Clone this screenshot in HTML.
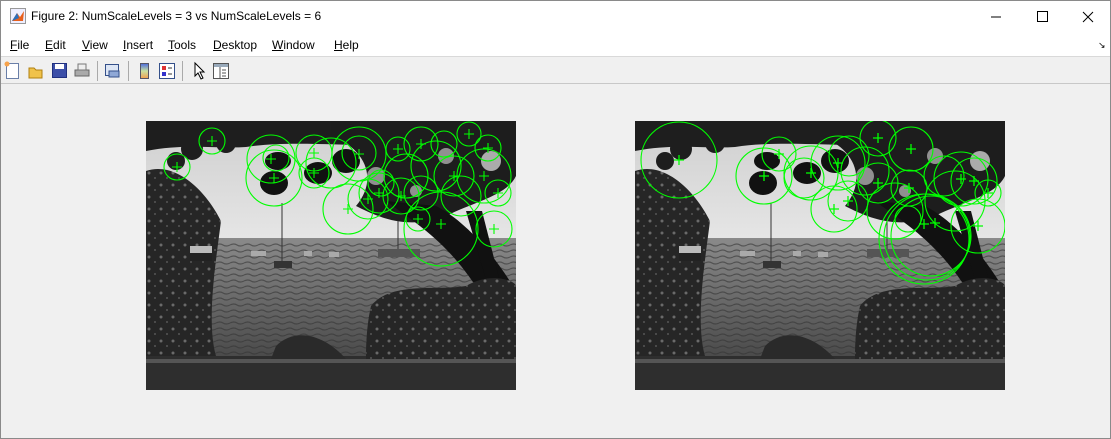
<!DOCTYPE html>
<html><head><style>
*{margin:0;padding:0;box-sizing:border-box}
body{width:1111px;height:439px;overflow:hidden;background:#f0f0f0;font-family:"Liberation Sans",sans-serif;font-size:12px;color:#000;position:relative;border:1px solid #8a8a8a}
.title{position:absolute;left:0;top:0;width:1109px;height:31px;background:#fff}
.title span{position:absolute;left:30px;top:8px;font-size:12px}
.menu{position:absolute;left:0;top:31px;width:1109px;height:25px;background:#fff;border-bottom:1px solid #d9d9d9}
.menu span{position:absolute;top:6px}
.tb{position:absolute;left:0;top:57px;width:1109px;height:26px;background:#f0f0f0;border-bottom:1px solid #c8c8c8}
.sep{position:absolute;top:3px;width:1px;height:20px;background:#aaa}
.img{position:absolute;top:120px;width:370px;height:269px}
</style></head><body>
<div class="title">
<svg style="position:absolute;left:9px;top:7px" width="16" height="16"><rect x="0.5" y="0.5" width="15" height="15" fill="#eef" stroke="#999"/><path d="M2 13 L7 5 L10 9 L14 3 L13 13 Z" fill="#e8601c"/><path d="M2 13 L7 5 L9 10 Z" fill="#2a6ebb"/></svg>
<span>Figure 2: NumScaleLevels = 3 vs NumScaleLevels = 6</span>
<svg style="position:absolute;left:990px;top:10px" width="110" height="12"><path d="M0 6 H10" stroke="#000"/><rect x="46.5" y="0.5" width="10" height="10" fill="none" stroke="#000"/><path d="M92 1 L102 11 M102 1 L92 11" stroke="#000"/></svg>
</div>
<div class="menu">
<span style="left:9px"><u>F</u>ile</span><span style="left:44px"><u>E</u>dit</span><span style="left:81px"><u>V</u>iew</span><span style="left:122px"><u>I</u>nsert</span><span style="left:167px"><u>T</u>ools</span><span style="left:212px"><u>D</u>esktop</span><span style="left:271px"><u>W</u>indow</span><span style="left:333px"><u>H</u>elp</span>
<span style="left:1097px;top:8px;font-size:9px">↘</span>
</div>
<div class="tb">
<svg width="240" height="26" style="position:absolute;left:0;top:0">
<rect x="5.5" y="5.5" width="12" height="15" fill="#fff" stroke="#6a7fa8"/><circle cx="6" cy="6" r="2.5" fill="#f7a34b"/>
<path d="M28 10 h5 l2 2 h6 v8 h-13z" fill="#f0c24a" stroke="#b08010"/>
<rect x="51.5" y="5.5" width="14" height="14" fill="#3c4fa8" stroke="#203080"/><rect x="54" y="6" width="9" height="5" fill="#fff"/>
<path d="M74 12 h14 v6 h-14z" fill="#aaa" stroke="#666"/><rect x="77" y="6" width="8" height="6" fill="#eee" stroke="#777"/>
<rect x="104.5" y="6.5" width="13" height="11" fill="#dde6f5" stroke="#34508a"/><rect x="108" y="13" width="10" height="6" fill="#8fa8d6" stroke="#34508a"/>
<defs><linearGradient id="cb" x1="0" y1="0" x2="0" y2="1"><stop offset="0" stop-color="#4a6adf"/><stop offset=".5" stop-color="#c8e0a0"/><stop offset="1" stop-color="#f0a050"/></linearGradient></defs>
<rect x="139.5" y="5.5" width="8" height="15" fill="url(#cb)" stroke="#556"/>
<rect x="158.5" y="5.5" width="15" height="15" fill="#fff" stroke="#34508a"/><rect x="161" y="8" width="4" height="4" fill="#d33"/><rect x="161" y="14" width="4" height="4" fill="#33c"/><path d="M167 10 h4 M167 16 h4" stroke="#333"/>
<path d="M194 5 v13 l3 -3 l3 6 l2 -1 l-3 -6 h4z" fill="#fff" stroke="#000"/>
<rect x="212.5" y="5.5" width="15" height="15" fill="#fff" stroke="#555"/><rect x="213" y="6" width="14" height="3" fill="#9ab"/><path d="M219 9 v11 M221 12 h4 M221 15 h4 M221 18 h4" stroke="#555"/>
</svg>
<div class="sep" style="left:96px"></div><div class="sep" style="left:127px"></div><div class="sep" style="left:181px"></div>
</div>

<svg width="0" height="0" style="position:absolute">
<defs>
<linearGradient id="sky" x1="0" y1="0" x2="0" y2="1"><stop offset="0" stop-color="#cfcfcf"/><stop offset=".45" stop-color="#e6e6e6"/><stop offset="1" stop-color="#bdbdbd"/></linearGradient>
<linearGradient id="wat" x1="0" y1="0" x2="0" y2="1"><stop offset="0" stop-color="#8a8a8a"/><stop offset="1" stop-color="#4a4a4a"/></linearGradient>
<pattern id="rip" width="14" height="6" patternUnits="userSpaceOnUse"><rect width="14" height="6" fill="none"/><path d="M0 4 Q4 2 7 4 T14 4" stroke="#333" stroke-width="1.2" fill="none" opacity=".6"/></pattern>
<pattern id="leaf" width="12" height="12" patternUnits="userSpaceOnUse"><rect width="12" height="12" fill="#262626"/><circle cx="3" cy="4" r="1.5" fill="#6a6a6a"/><circle cx="9" cy="9" r="1" fill="#555"/></pattern>
<g id="scene">
<rect width="370" height="269" fill="url(#sky)"/>
<rect y="117" width="370" height="120" fill="url(#wat)"/>
<rect y="122" width="370" height="113" fill="url(#rip)"/>
<rect y="235" width="370" height="34" fill="#2e2e2e"/>
<rect y="238" width="370" height="4" fill="#555"/>
<path d="M0 0 H370 V20 C330 25 300 30 260 22 C220 28 150 18 100 26 C70 28 40 22 0 30 Z" fill="#1e1e1e"/>
<circle cx="30" cy="40" r="9" fill="#1e1e1e"/><circle cx="46" cy="28" r="11" fill="#1e1e1e"/><circle cx="80" cy="22" r="10" fill="#1e1e1e"/>
<ellipse cx="128" cy="62" rx="14" ry="12" fill="#111"/><ellipse cx="132" cy="40" rx="13" ry="9" fill="#111"/>
<ellipse cx="172" cy="52" rx="14" ry="11" fill="#111"/><ellipse cx="200" cy="40" rx="14" ry="12" fill="#111"/>
<path d="M185 15 C215 25 235 55 210 85 C230 95 260 110 300 95 C330 80 360 75 370 55 V0 H185Z" fill="#1d1d1d"/>
<circle cx="230" cy="55" r="9" fill="#ddd" opacity=".6"/><circle cx="300" cy="35" r="8" fill="#ddd" opacity=".6"/><circle cx="345" cy="40" r="10" fill="#e8e8e8" opacity=".7"/><circle cx="270" cy="70" r="6" fill="#ddd" opacity=".6"/>
<path d="M240 80 C280 110 320 130 365 230 L370 230 V170 C340 120 310 95 290 85Z" fill="#111"/>
<path d="M320 90 L352 200 L364 200 L336 90Z" fill="#111"/>
<path d="M0 50 C30 40 60 70 75 100 C70 140 60 200 70 235 H0Z" fill="url(#leaf)"/>
<path d="M225 185 C245 160 290 170 320 165 C345 150 370 160 370 165 V238 H220 C220 215 222 198 225 185Z" fill="url(#leaf)"/>
<path d="M130 225 C150 205 180 215 200 238 H125Z" fill="#2a2a2a"/>
<rect x="44" y="125" width="22" height="12" fill="#bbb"/><rect x="44" y="132" width="22" height="8" fill="#222"/>
<rect x="128" y="140" width="18" height="7" fill="#333"/><path d="M136 82 V140" stroke="#333"/>
<rect x="232" y="128" width="42" height="8" fill="#555"/><path d="M252 100 V128" stroke="#333"/>
<rect x="105" y="130" width="15" height="5" fill="#aaa"/><rect x="158" y="130" width="8" height="5" fill="#aaa"/><rect x="183" y="131" width="10" height="5" fill="#aaa"/>
</g>
</defs>
</svg>

<svg class="img" style="left:145px" viewBox="0 0 370 269"><use href="#scene"/>
<g fill="none" stroke="#00ff00" stroke-width="1.1">
<circle cx="31" cy="46" r="13"/><circle cx="66" cy="20" r="13"/><circle cx="125" cy="38" r="24"/><circle cx="130" cy="37" r="13"/><circle cx="128" cy="57" r="28"/><circle cx="168" cy="32" r="18"/><circle cx="168" cy="52" r="15"/><circle cx="185" cy="42" r="25"/><circle cx="213" cy="33" r="27"/><circle cx="213" cy="32" r="17"/><circle cx="202" cy="88" r="25"/><circle cx="222" cy="78" r="20"/><circle cx="233" cy="72" r="20"/><circle cx="255" cy="75" r="18"/><circle cx="272" cy="98" r="12"/><circle cx="295" cy="108" r="37"/><circle cx="252" cy="28" r="12"/><circle cx="275" cy="23" r="17"/><circle cx="298" cy="23" r="13"/><circle cx="323" cy="13" r="12"/><circle cx="342" cy="27" r="13"/><circle cx="338" cy="55" r="27"/><circle cx="352" cy="72" r="13"/><circle cx="348" cy="108" r="18"/><circle cx="308" cy="55" r="20"/><circle cx="275" cy="72" r="17"/><circle cx="315" cy="75" r="20"/><circle cx="235" cy="62" r="13"/><circle cx="260" cy="55" r="22"/><circle cx="290" cy="45" r="25"/>
</g>
<path stroke="#00ff00" stroke-width="1.1" d="M26 46h10M31 41v10M61 20h10M66 15v10M120 38h10M125 33v10M123 57h10M128 52v10M163 32h10M168 27v10M163 52h10M168 47v10M208 33h10M213 28v10M197 88h10M202 83v10M217 78h10M222 73v10M228 72h10M233 67v10M250 75h10M255 70v10M267 98h10M272 93v10M290 103h10M295 98v10M247 28h10M252 23v10M270 23h10M275 18v10M318 13h10M323 8v10M337 27h10M342 22v10M333 55h10M338 50v10M347 72h10M352 67v10M343 108h10M348 103v10M303 55h10M308 50v10"/>
</svg>

<svg class="img" style="left:634px" viewBox="0 0 370 269"><use href="#scene"/>
<g fill="none" stroke="#00ff00" stroke-width="1.1">
<circle cx="44" cy="39" r="38"/><circle cx="129" cy="55" r="28"/><circle cx="144" cy="33" r="17"/><circle cx="176" cy="52" r="27"/><circle cx="169" cy="57" r="20"/><circle cx="203" cy="42" r="27"/><circle cx="214" cy="35" r="20"/><circle cx="199" cy="88" r="23"/><circle cx="213" cy="80" r="20"/><circle cx="243" cy="17" r="18"/><circle cx="276" cy="28" r="22"/><circle cx="243" cy="62" r="20"/><circle cx="274" cy="67" r="18"/><circle cx="289" cy="118" r="45"/><circle cx="296" cy="115" r="40"/><circle cx="292" cy="116" r="43"/><circle cx="343" cy="105" r="27"/><circle cx="339" cy="60" r="23"/><circle cx="326" cy="58" r="27"/><circle cx="309" cy="55" r="20"/><circle cx="273" cy="98" r="13"/><circle cx="353" cy="72" r="13"/><circle cx="230" cy="50" r="24"/><circle cx="260" cy="90" r="28"/><circle cx="320" cy="80" r="30"/>
</g>
<path stroke="#00ff00" stroke-width="1.3" d="M39 39h10M44 34v10M124 55h10M129 50v10M139 33h10M144 28v10M171 52h10M176 47v10M198 42h10M203 37v10M194 88h10M199 83v10M208 80h10M213 75v10M238 17h10M243 12v10M271 28h10M276 23v10M238 62h10M243 57v10M269 67h10M274 62v10M284 103h10M289 98v10M295 102h10M300 97v10M338 105h10M343 100v10M334 60h10M339 55v10M321 58h10M326 53v10M348 72h10M353 67v10"/>
</svg>
</body></html>
